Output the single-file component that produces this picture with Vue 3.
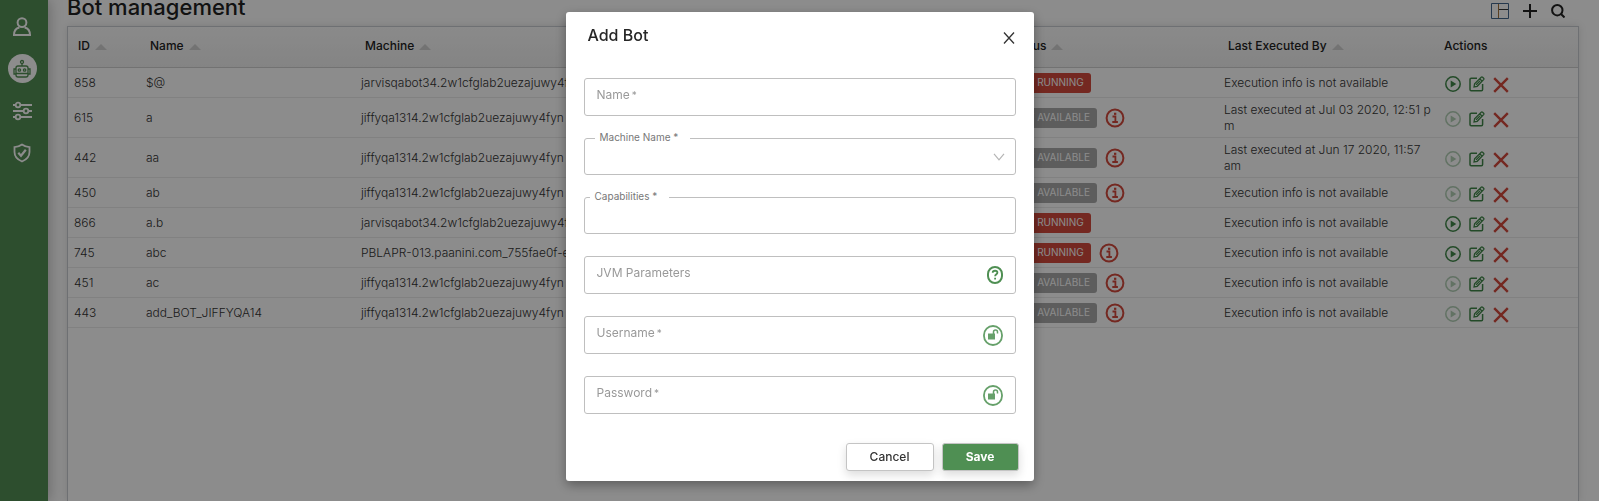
<script setup>
import { ref } from 'vue'

const columns = [
  { key: 'id', label: 'ID', sortable: true },
  { key: 'name', label: 'Name', sortable: true },
  { key: 'machine', label: 'Machine', sortable: true },
  { key: 'status', label: 'Status', sortable: true },
  { key: 'last', label: 'Last Executed By', sortable: true },
  { key: 'actions', label: 'Actions', sortable: false },
]

const jiffy = 'jiffyqa1314.2w1cfglab2uezajuwy4fyn'
const jarvis = 'jarvisqabot34.2w1cfglab2uezajuwy4f'
const none = 'Execution info is not available'

const bots = [
  { id: 858, name: '$@', machine: jarvis, state: 'running', info: false, play: true, last: none },
  { id: 615, name: 'a', machine: jiffy, state: 'available', info: true, play: false, last: 'Last executed at Jul 03 2020, 12:51 p\nm' },
  { id: 442, name: 'aa', machine: jiffy, state: 'available', info: true, play: false, last: 'Last executed at Jun 17 2020, 11:57\nam' },
  { id: 450, name: 'ab', machine: jiffy, state: 'available', info: true, play: false, last: none },
  { id: 866, name: 'a.b', machine: jarvis, state: 'running', info: false, play: true, last: none },
  { id: 745, name: 'abc', machine: 'PBLAPR-013.paanini.com_755fae0f-e', state: 'running', info: true, play: true, last: none },
  { id: 451, name: 'ac', machine: jiffy, state: 'available', info: true, play: false, last: none },
  { id: 443, name: 'add_BOT_JIFFYQA14', machine: jiffy, state: 'available', info: true, play: false, last: none },
]

const form = ref({ name: '', machine: '', capabilities: '', jvm: '', username: '', password: '' })
</script>

<template>
  <div class="app">
    <nav class="sidebar" aria-label="Main">
      <a href="#users" aria-label="Users">
        <svg width="20" height="20" viewBox="0 0 20 20" fill="none" stroke="#fff" stroke-width="2">
          <circle cx="10" cy="5.6" r="4.4" />
          <path d="M2 18.2c0-4.6 2.6-7 5.4-7.6M18 18.2c0-4.6-2.6-7-5.4-7.6M1 18h18" />
        </svg>
      </a>
      <a href="#bots" class="active" aria-label="Bots">
        <svg width="18" height="20" viewBox="0 0 18 20" fill="none" stroke="#518e53" stroke-width="1.3">
          <circle cx="9" cy="3" r="1.5" />
          <path d="M9 4.5v2.5M3 16V9q0-2 2-2h8q2 0 2 2v7q0 2-2 2H5q-2 0-2-2zM3 14.5h12M2.600 10H1v5h2M15.400 10H17v5h-2" />
          <circle cx="6.400" cy="11" r="1.200" />
          <circle cx="11.600" cy="11" r="1.200" />
        </svg>
      </a>
      <a href="#settings" aria-label="Settings">
        <svg width="20" height="20" viewBox="0 0 20 20" fill="none" stroke="#fff" stroke-width="1.800">
          <path d="M1 4h2.500M8.500 4H20M1 10h10.500M16.500 10H20M1 16h2.500M8.500 16H20" />
          <circle cx="6" cy="4" r="2.300" />
          <circle cx="14" cy="10" r="2.300" />
          <circle cx="6" cy="16" r="2.300" />
        </svg>
      </a>
      <a href="#security" aria-label="Security">
        <svg width="18" height="20" viewBox="0 0 18 20" fill="none" stroke="#fff" stroke-width="1.800">
          <path d="M9 1.500Q12.500 4 16.500 4.200V9c0 4.200-2.500 7.500-7.500 9.500C4 16.500 1.500 13.200 1.500 9V4.200Q5.500 4 9 1.500z" />
          <path d="M5.300 9.700l2.700 3 4.800-5.900" stroke-width="2.200" />
        </svg>
      </a>
    </nav>

    <main class="content">
      <header class="page-head">
        <h1>Bot management</h1>
        <div class="tools">
          <button type="button" aria-label="Columns">
            <svg width="18" height="16" viewBox="0 0 18 16" fill="none" stroke-width="1">
              <path d="M.5.5h17v15H.5z" stroke="#44678c" />
              <path d="M7.500 1v14" stroke="#a5763f" />
              <path d="M8 6.500h9" stroke="#333" />
            </svg>
          </button>
          <button type="button" aria-label="Add bot">
            <svg width="14" height="14" viewBox="0 0 14 14" stroke="#222" stroke-width="2"><path d="M7 0v14M0 7h14" /></svg>
          </button>
          <button type="button" aria-label="Search">
            <svg width="14" height="14" viewBox="0 0 14 14" fill="none" stroke="#222" stroke-width="2"><circle cx="6.300" cy="6.200" r="5.200" /><path d="M10 10l3.500 3.500" /></svg>
          </button>
        </div>
      </header>

      <section class="card">
        <table>
          <colgroup>
            <col v-for="c in columns" :key="c.key" :class="'col-' + c.key" />
          </colgroup>
          <thead>
            <tr>
              <th v-for="c in columns" :key="c.key" scope="col">
                {{ c.label }}<i v-if="c.sortable" class="sort"></i>
              </th>
            </tr>
          </thead>
          <tbody>
            <tr v-for="b in bots" :key="b.id">
              <td>{{ b.id }}</td>
              <td>{{ b.name }}</td>
              <td>{{ b.machine }}</td>
              <td>
                <div class="status">
                  <span class="badge" :class="b.state">{{ b.state === 'running' ? 'NOT RUNNING' : 'NOT AVAILABLE' }}</span>
                  <svg v-if="b.info" width="20" height="20" viewBox="0 0 20 20" fill="none" stroke="#d34a3c">
                    <circle cx="10" cy="10" r="8.400" stroke-width="2" />
                    <path d="M7.500 8.500h2.900v5M7.300 14h5.600" stroke-width="1.800" />
                    <path d="M9 5.800h2.300" stroke-width="2.200" />
                  </svg>
                </div>
              </td>
              <td class="last">{{ b.last }}</td>
              <td>
                <div class="actions">
                  <button type="button" aria-label="Run" :disabled="!b.play">
                    <svg width="16" height="16" viewBox="0 0 16 16"><circle cx="8" cy="8" r="7.200" fill="none" stroke="#408849" stroke-width="1.500" /><path d="M5.700 4.500l5.600 3.500-5.600 3.500z" fill="#408849" /></svg>
                  </button>
                  <button type="button" aria-label="Edit">
                    <svg width="16" height="16" viewBox="0 0 16 16" fill="none" stroke="#408849" stroke-width="1.500">
                      <path d="M8 2.300H2.200q-1.200 0-1.200 1.200v10q0 1.200 1.200 1.200h10.200q1.200 0 1.200-1.200V8" />
                      <path d="M5 11l.6-3.200 6.600-6.600q.7-.6 1.400 0l1 1q.6.700 0 1.400L8.200 10.300zM10.700 2.700l2.500 2.500M7 8.900l4-4" stroke-width="1.300" />
                    </svg>
                  </button>
                  <button type="button" class="remove" aria-label="Delete">
                    <svg width="16" height="16" viewBox="0 0 16 16" stroke="#d34a3c" stroke-width="2.400"><path d="M1.200 1.200l13.600 13.600M14.800 1.200L1.200 14.800" /></svg>
                  </button>
                </div>
              </td>
            </tr>
          </tbody>
        </table>
      </section>
    </main>

    <div class="overlay">
      <form class="modal" role="dialog" aria-labelledby="dialog-title" @submit.prevent>
        <div class="modal-head">
          <h2 id="dialog-title">Add Bot</h2>
          <button type="button" aria-label="Close">
            <svg width="12" height="12" viewBox="0 0 12 12" stroke="#333" stroke-width="1.300"><path d="M1 .5l10 11M11 .5L1 11.500" /></svg>
          </button>
        </div>

        <div class="fields">
          <div class="field">
            <input id="name" v-model="form.name" type="text" />
            <label for="name">Name<sup>*</sup></label>
          </div>
          <div class="field short">
            <select id="machine" v-model="form.machine"></select>
            <label for="machine" class="float machine">Machine Name *</label>
            <svg class="chevron" width="12" height="8" viewBox="0 0 12 8" fill="none" stroke="#b5b5b5" stroke-width="1.200"><path d="M1 .8l5 6 5-6" /></svg>
          </div>
          <div class="field short">
            <input id="capabilities" v-model="form.capabilities" type="text" />
            <label for="capabilities" class="float">Capabilities *</label>
          </div>
          <div class="field">
            <input id="jvm" v-model="form.jvm" type="text" />
            <label for="jvm">JVM Parameters</label>
            <button type="button" aria-label="Help">
              <svg width="16" height="18" viewBox="0 0 16 18" fill="none" stroke="#4f8f53" stroke-width="2">
                <rect x="1" y="1" width="14" height="16" rx="7" />
                <path d="M5.700 6.700c0-2.600 4.700-2.600 4.700 0 0 1.600-2.300 1.500-2.300 3.500M8.100 11.700v1.700" stroke-width="1.800" />
              </svg>
            </button>
          </div>
          <div class="field">
            <input id="username" v-model="form.username" type="text" />
            <label for="username">Username<sup>*</sup></label>
            <button type="button" aria-label="Unlock username">
              <svg width="20" height="21" viewBox="0 0 20 21" fill="none" stroke="#66a06a">
                <rect x="1" y="1" width="18" height="19" rx="9" stroke-width="1.800" />
                <path d="M10.500 9V7q0-2 2-2t2 2v1.500" stroke-width="1.500" />
                <path d="M5 8.500h7v6H5z" fill="#66a06a" stroke="none" />
              </svg>
            </button>
          </div>
          <div class="field">
            <input id="password" v-model="form.password" type="password" />
            <label for="password">Password<sup>*</sup></label>
            <button type="button" aria-label="Unlock password">
              <svg width="20" height="21" viewBox="0 0 20 21" fill="none" stroke="#66a06a">
                <rect x="1" y="1" width="18" height="19" rx="9" stroke-width="1.800" />
                <path d="M10.500 9V7q0-2 2-2t2 2v1.500" stroke-width="1.500" />
                <path d="M5 8.500h7v6H5z" fill="#66a06a" stroke="none" />
              </svg>
            </button>
          </div>
        </div>

        <div class="modal-foot">
          <button type="button" class="cancel">Cancel</button>
          <button type="submit" class="save">Save</button>
        </div>
      </form>
    </div>
  </div>
</template>

<style>
body {
  overflow: hidden;
}
</style>

<style scoped>
.app,
.app * {
  box-sizing: border-box;
}
.app {
  display: flex;
  min-height: 100vh;
  font-family: Inter, "Open Sans", sans-serif;
  font-size: 12px;
  line-height: 16px;
  color: #333;
  background: #fff;
}
button,
input,
select {
  margin: 0;
  padding: 0;
  border: 0;
  background: none;
  font: inherit;
  color: inherit;
}
svg {
  display: block;
  flex: none;
}
.sidebar {
  flex: none;
  width: 48px;
  padding: 12px 4px 0 0;
  display: flex;
  flex-direction: column;
  align-items: center;
  gap: 13px;
  background: #528e54;
  box-shadow: 0 0 14px rgba(0, 0, 0, 0.3);
}
.sidebar a {
  width: 29px;
  height: 29px;
  border-radius: 50%;
  display: flex;
  align-items: center;
  justify-content: center;
}
.sidebar .active {
  background: #fff;
}
.content {
  flex: 1;
  min-width: 0;
  padding: 0 20px 0 19px;
  display: flex;
  flex-direction: column;
}
.page-head {
  height: 26px;
  display: flex;
  justify-content: space-between;
}
h1 {
  margin: 0;
  font-size: 22px;
  line-height: 14px;
  font-weight: 500;
  color: #222;
}
.tools {
  height: 22px;
  display: flex;
  align-items: center;
  gap: 14px;
  padding-right: 14px;
}
.card {
  flex: 1;
  border: 1px solid #c8ccd2;
  border-bottom: 0;
  box-shadow: 0 0 8px rgba(0, 0, 0, 0.12);
}
table {
  width: 100%;
  table-layout: fixed;
  border-collapse: separate;
  border-spacing: 0;
}
.col-id { width: 72px; }
.col-name { width: 215px; }
.col-status { width: 218px; }
.col-last { width: 219px; }
.col-actions { width: 141px; }
th {
  height: 41px;
  padding: 0 10px 3px;
  text-align: left;
  font-weight: 500;
  color: #222;
  white-space: nowrap;
  background: linear-gradient(#fbfbfb, #f1f1f1);
  border-bottom: 1px solid #d0d0d0;
}
th:last-child {
  padding-left: 7px;
}
.sort {
  display: inline-block;
  margin-left: 5px;
  border: solid transparent;
  border-width: 0 6px 6px;
  border-bottom-color: #d2d2d2;
}
td {
  height: 30px;
  padding: 4px 6px 3px;
  border-bottom: 1px solid #ebebeb;
  font-weight: 300;
  white-space: nowrap;
  overflow: hidden;
}
.last {
  white-space: pre;
}
.status {
  display: flex;
  align-items: center;
  gap: 8px;
}
.badge {
  height: 20px;
  padding: 0 7px;
  border-radius: 3px;
  font-size: 10px;
  line-height: 19px;
  font-weight: 400;
  color: #fff;
}
.badge.running {
  background: #d34a3c;
}
.badge.available {
  background: #aaa;
}
.actions {
  display: flex;
  gap: 8px;
  padding: 2px 0 0 2px;
}
.actions button:disabled {
  opacity: 0.4;
}
.actions .remove {
  padding-top: 1px;
}
.overlay {
  position: fixed;
  inset: 0;
  display: flex;
  align-items: flex-start;
  justify-content: center;
  padding-top: 12px;
  background: rgba(0, 0, 0, 0.45);
}
.modal {
  width: 468px;
  background: #fff;
  border-radius: 3px;
  box-shadow: 0 4px 12px rgba(0, 0, 0, 0.35);
}
.modal-head {
  height: 66px;
  padding: 13px 19px 0 22px;
  display: flex;
  justify-content: space-between;
  align-items: flex-start;
}
h2 {
  margin: 0;
  font-size: 16px;
  line-height: 20px;
  font-weight: 500;
  color: #262626;
}
.modal-head button {
  padding-top: 7px;
}
.fields {
  padding: 0 18px;
  display: flex;
  flex-direction: column;
  gap: 22px;
}
.field {
  position: relative;
  display: flex;
  align-items: center;
  height: 38px;
  padding-right: 12px;
  border: 1px solid #bfbfbf;
  border-radius: 3px;
}
.field.short {
  height: 37px;
}
.field input,
.field select {
  flex: 1;
  min-width: 0;
  height: 100%;
  padding: 0 12px;
  outline: 0;
  appearance: none;
}
.field label {
  position: absolute;
  left: 12px;
  top: 8px;
  color: #999;
}
.field sup {
  margin-left: 2px;
  line-height: 0;
  vertical-align: baseline;
}
.field .float {
  left: 5px;
  top: -10px;
  padding: 0 12px 0 5px;
  font-size: 10px;
  color: #777;
  background: #fff;
}
.field .machine {
  left: 10px;
}
.chevron {
  margin-right: -2px;
}
.modal-foot {
  padding: 29px 15px 10px;
  display: flex;
  justify-content: flex-end;
  gap: 8px;
}
.modal-foot button {
  height: 28px;
  border: 1px solid #c4c4c4;
  border-radius: 3px;
  font-weight: 500;
  box-shadow: 0 4px 10px rgba(0, 0, 0, 0.14);
}
.modal-foot .cancel {
  width: 88px;
  color: #333;
  background: #fff;
}
.modal-foot .save {
  width: 77px;
  font-weight: 700;
  color: #fff;
  background: #4f8f53;
}
</style>
